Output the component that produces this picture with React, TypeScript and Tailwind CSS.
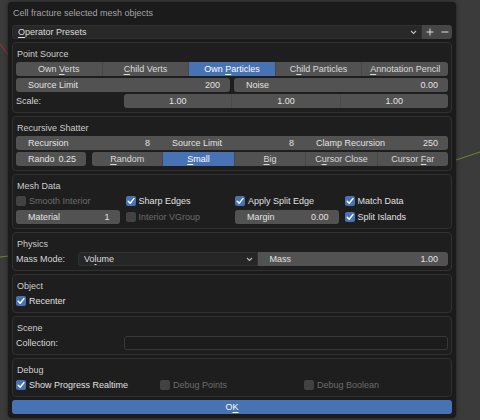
import React from "react";

const U = ({ t, i }: { t: string; i: number }) => (
  <span className="whitespace-pre">
    {t.slice(0, i)}
    <span className="underline decoration-1 underline-offset-[2px]">{t[i]}</span>
    {t.slice(i + 1)}
  </span>
);

type Opt = { t: string; u: number };

const ToggleRow = ({
  items,
  active,
  className = "",
}: {
  items: Opt[];
  active: number;
  className?: string;
}) => (
  <div className={`flex h-[14px] shrink-0 overflow-hidden rounded-[3px] ${className}`}>
    {items.map((it, i) => (
      <div
        key={it.t}
        className={`flex flex-1 items-center justify-center ${
          i === active ? "bg-[#4772b3] text-white" : "bg-[#525252] text-[#dadada]"
        } ${i > 0 ? "border-l border-[#474747]" : ""}`}
      >
        <U t={it.t} i={it.u} />
      </div>
    ))}
  </div>
);

const NumField = ({
  label,
  value,
  className = "",
}: {
  label: string;
  value: string;
  className?: string;
}) => (
  <div
    className={`flex h-[14px] flex-1 items-center justify-between bg-[#525252] pl-[12px] pr-[10px] text-[#e2e2e2] ${className}`}
  >
    <span>{label}</span>
    <span>{value}</span>
  </div>
);

const Check = ({
  label,
  checked = false,
  disabled = false,
}: {
  label: string;
  checked?: boolean;
  disabled?: boolean;
}) => (
  <div className="flex h-[14px] items-center gap-[3px]">
    <span
      className={`flex h-[10px] w-[10px] items-center justify-center rounded-[2px] ${
        checked ? "bg-[#4772b3]" : disabled ? "bg-[#424242]" : "bg-[#545454]"
      }`}
    >
      {checked && (
        <svg width="10" height="10" viewBox="0 0 10 10">
          <polyline
            points="2.2,5.2 4.2,7.2 7.9,2.6"
            fill="none"
            stroke="white"
            strokeWidth="1.5"
            strokeLinecap="round"
            strokeLinejoin="round"
          />
        </svg>
      )}
    </span>
    <span className={disabled ? "text-[#6c6c6c]" : "text-[#e0e0e0]"}>{label}</span>
  </div>
);

const Chevron = () => (
  <svg width="7" height="5" viewBox="0 0 7 5">
    <polyline points="1,1 3.5,3.5 6,1" fill="none" stroke="#bdbdbd" strokeWidth="1.1" />
  </svg>
);

const Panel = ({ title, children }: { title: string; children: React.ReactNode }) => (
  <div className="rounded-[4px] border border-[#313131] bg-[#1e1e1e] px-[3px] pb-[4px] pt-[3px]">
    <div className="flex h-[16px] items-center pl-[1px] text-[#cdcdcd]">{title}</div>
    <div className="flex flex-col gap-[2px]">{children}</div>
  </div>
);

export default function App() {
  return (
    <div className="relative h-[420px] w-[480px] overflow-hidden bg-[#3b3b3b] font-['Liberation_Sans',sans-serif] text-[9px] leading-none">
      <svg className="absolute inset-0" width="480" height="420">
        <line x1="0" y1="44" x2="10" y2="57" stroke="#a03232" strokeWidth="1" />
        <line x1="456" y1="160" x2="480" y2="152" stroke="#6b8c2c" strokeWidth="1" />
        <line x1="0" y1="257" x2="9" y2="256" stroke="#6b8c2c" strokeWidth="1" />
      </svg>

      <div className="relative ml-[8px] mt-[2px] flex w-[448px] flex-col rounded-[4px] bg-[#1b1b1b] px-[4px] pb-[4px] shadow-[0_0_4px_rgba(0,0,0,0.5)]">
        <div className="flex h-[22px] items-center pl-[1px] text-[#a4a4a4]">
          Cell fracture selected mesh objects
        </div>

        <div className="mt-[1px] flex h-[14px]">
          <div className="flex flex-1 items-center justify-between rounded-l-[3px] border border-[#303030] bg-[#282828] pl-[5px] pr-[4px] text-[#dcdcdc]">
            <U t="Operator Presets" i={0} />
            <Chevron />
          </div>
          <div className="flex w-[30px] items-center justify-around rounded-r-[3px] bg-[#464646] text-[#dcdcdc]">
            <svg width="8" height="8" viewBox="0 0 8 8">
              <path d="M4 0.5V7.5M0.5 4H7.5" stroke="#dcdcdc" strokeWidth="1" />
            </svg>
            <svg width="8" height="8" viewBox="0 0 8 8">
              <path d="M0.5 4H7.5" stroke="#dcdcdc" strokeWidth="1" />
            </svg>
          </div>
        </div>

        <div className="mt-[3px] flex flex-col gap-[3px]">
          <Panel title="Point Source">
            <ToggleRow
              active={2}
              items={[
                { t: "Own Verts", u: 4 },
                { t: "Child Verts", u: 0 },
                { t: "Own Particles", u: 4 },
                { t: "Child Particles", u: 1 },
                { t: "Annotation Pencil", u: 0 },
              ]}
            />
            <div className="grid grid-cols-2 gap-[4px]">
              <NumField label="Source Limit" value="200" className="rounded-[3px]" />
              <NumField label="Noise" value="0.00" className="rounded-[3px]" />
            </div>
            <div className="flex h-[14px] items-center">
              <span className="w-[108px] text-[#d6d6d6]">Scale:</span>
              <div className="flex h-[14px] flex-1 overflow-hidden rounded-[3px] text-[#e2e2e2]">
                <div className="flex flex-1 items-center justify-center bg-[#525252]">1.00</div>
                <div className="flex flex-1 items-center justify-center border-l border-[#4a4a4a] bg-[#525252]">1.00</div>
                <div className="flex flex-1 items-center justify-center border-l border-[#4a4a4a] bg-[#525252]">1.00</div>
              </div>
            </div>
          </Panel>

          <Panel title="Recursive Shatter">
            <div className="flex h-[14px] overflow-hidden rounded-[3px]">
              <NumField label="Recursion" value="8" />
              <NumField label="Source Limit" value="8" />
              <NumField label="Clamp Recursion" value="250" />
            </div>
            <div className="flex h-[14px] gap-[6px]">
              <div className="flex w-[70px] items-center justify-between rounded-[3px] bg-[#525252] pl-[12px] pr-[10px] text-[#e2e2e2]">
                <span>Rando</span>
                <span>0.25</span>
              </div>
              <ToggleRow
                className="flex-1"
                active={1}
                items={[
                  { t: "Random", u: 0 },
                  { t: "Small", u: 0 },
                  { t: "Big", u: 0 },
                  { t: "Cursor Close", u: 1 },
                  { t: "Cursor Far", u: 7 },
                ]}
              />
            </div>
          </Panel>

          <Panel title="Mesh Data">
            <div className="grid grid-cols-4 gap-x-[6px]">
              <Check label="Smooth Interior" disabled />
              <Check label="Sharp Edges" checked />
              <Check label="Apply Split Edge" checked />
              <Check label="Match Data" checked />
            </div>
            <div className="grid grid-cols-4 gap-x-[6px]">
              <NumField label="Material" value="1" className="rounded-[3px]" />
              <Check label="Interior VGroup" disabled />
              <NumField label="Margin" value="0.00" className="rounded-[3px]" />
              <Check label="Split Islands" checked />
            </div>
          </Panel>

          <Panel title="Physics">
            <div className="flex h-[14px] items-center">
              <span className="w-[62px] text-[#d6d6d6]">Mass Mode:</span>
              <div className="flex h-[14px] flex-1">
                <div className="flex flex-1 items-center justify-between rounded-l-[3px] border border-[#333333] bg-[#262626] pl-[5px] pr-[4px] text-[#dcdcdc]">
                  <U t="Volume" i={2} />
                  <Chevron />
                </div>
                <NumField label="Mass" value="1.00" className="rounded-r-[3px] pl-[11px]" />
              </div>
            </div>
          </Panel>

          <Panel title="Object">
            <Check label="Recenter" checked />
          </Panel>

          <Panel title="Scene">
            <div className="flex h-[14px] items-center">
              <span className="w-[108px] text-[#d6d6d6]">Collection:</span>
              <div className="h-[14px] flex-1 rounded-[3px] border border-[#383838] bg-[#1c1c1c]" />
            </div>
          </Panel>

          <Panel title="Debug">
            <div className="grid grid-cols-3">
              <Check label="Show Progress Realtime" checked />
              <Check label="Debug Points" disabled />
              <Check label="Debug Boolean" disabled />
            </div>
          </Panel>
        </div>

        <div className="mt-[3px] flex h-[14px] items-center justify-center rounded-[3px] bg-[#4772b3] text-white">
          <U t="OK" i={1} />
        </div>
      </div>
    </div>
  );
}
